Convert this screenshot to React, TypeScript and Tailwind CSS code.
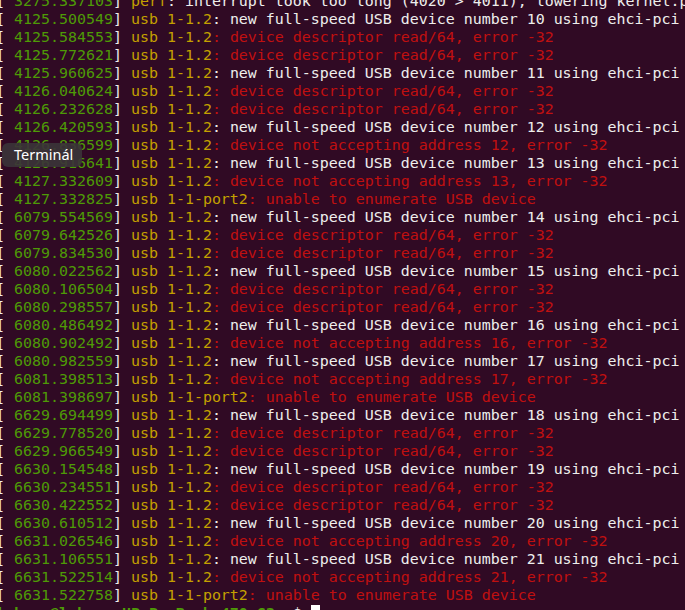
type Kind = "info" | "err";

const rows: [string, string, string, Kind][] = [
  ["3275.337103", "perf", ": interrupt took too long (4020 > 4011), lowering kernel.perf_event_max_sample_rate to 49500", "info"],
  ["4125.500549", "usb 1-1.2", ": new full-speed USB device number 10 using ehci-pci", "info"],
  ["4125.584553", "usb 1-1.2", ": device descriptor read/64, error -32", "err"],
  ["4125.772621", "usb 1-1.2", ": device descriptor read/64, error -32", "err"],
  ["4125.960625", "usb 1-1.2", ": new full-speed USB device number 11 using ehci-pci", "info"],
  ["4126.040624", "usb 1-1.2", ": device descriptor read/64, error -32", "err"],
  ["4126.232628", "usb 1-1.2", ": device descriptor read/64, error -32", "err"],
  ["4126.420593", "usb 1-1.2", ": new full-speed USB device number 12 using ehci-pci", "info"],
  ["4126.836599", "usb 1-1.2", ": device not accepting address 12, error -32", "err"],
  ["4126.916641", "usb 1-1.2", ": new full-speed USB device number 13 using ehci-pci", "info"],
  ["4127.332609", "usb 1-1.2", ": device not accepting address 13, error -32", "err"],
  ["4127.332825", "usb 1-1-port2", ": unable to enumerate USB device", "err"],
  ["6079.554569", "usb 1-1.2", ": new full-speed USB device number 14 using ehci-pci", "info"],
  ["6079.642526", "usb 1-1.2", ": device descriptor read/64, error -32", "err"],
  ["6079.834530", "usb 1-1.2", ": device descriptor read/64, error -32", "err"],
  ["6080.022562", "usb 1-1.2", ": new full-speed USB device number 15 using ehci-pci", "info"],
  ["6080.106504", "usb 1-1.2", ": device descriptor read/64, error -32", "err"],
  ["6080.298557", "usb 1-1.2", ": device descriptor read/64, error -32", "err"],
  ["6080.486492", "usb 1-1.2", ": new full-speed USB device number 16 using ehci-pci", "info"],
  ["6080.902492", "usb 1-1.2", ": device not accepting address 16, error -32", "err"],
  ["6080.982559", "usb 1-1.2", ": new full-speed USB device number 17 using ehci-pci", "info"],
  ["6081.398513", "usb 1-1.2", ": device not accepting address 17, error -32", "err"],
  ["6081.398697", "usb 1-1-port2", ": unable to enumerate USB device", "err"],
  ["6629.694499", "usb 1-1.2", ": new full-speed USB device number 18 using ehci-pci", "info"],
  ["6629.778520", "usb 1-1.2", ": device descriptor read/64, error -32", "err"],
  ["6629.966549", "usb 1-1.2", ": device descriptor read/64, error -32", "err"],
  ["6630.154548", "usb 1-1.2", ": new full-speed USB device number 19 using ehci-pci", "info"],
  ["6630.234551", "usb 1-1.2", ": device descriptor read/64, error -32", "err"],
  ["6630.422552", "usb 1-1.2", ": device descriptor read/64, error -32", "err"],
  ["6630.610512", "usb 1-1.2", ": new full-speed USB device number 20 using ehci-pci", "info"],
  ["6631.026546", "usb 1-1.2", ": device not accepting address 20, error -32", "err"],
  ["6631.106551", "usb 1-1.2", ": new full-speed USB device number 21 using ehci-pci", "info"],
  ["6631.522514", "usb 1-1.2", ": device not accepting address 21, error -32", "err"],
  ["6631.522758", "usb 1-1-port2", ": unable to enumerate USB device", "err"],
];

export default function App() {
  return (
    <div className="relative h-[610px] w-[685px] overflow-hidden bg-[#300a24]">
      <div className="-ml-[4px] -mt-[8px] whitespace-pre font-['DejaVu_Sans_Mono',monospace] text-[14.95px] leading-[18px] text-[#eeeeec]">
        {rows.map(([ts, dev, msg, kind]) => (
          <div key={ts} className="h-[18px]">
            <span>[ </span>
            <span className="text-[#4e9a06]">{ts}</span>
            <span>] </span>
            <span className="text-[#c4a000]">{dev}</span>
            <span className={kind === "err" ? "text-[#c01010]" : ""}>{msg}</span>
          </div>
        ))}
        <div className="h-[18px]">
          <span className="font-bold text-[#4e9a06]">lukasz@lukasz-HP-ProBook-470-G3</span>
          <span>:</span>
          <span className="font-bold text-[#3465a4]">~</span>
          <span>$ </span>
          <span className="inline-block h-[17px] w-[9px] translate-y-[1px] bg-white align-top"></span>
        </div>
      </div>

      <div className="absolute left-[2px] top-[143px] flex h-[24px] w-[80px] items-center rounded-[6px] bg-[#3b3438]/90 pl-[12px] font-['Noto_Sans',sans-serif] text-[14.5px] text-white">
        Terminál
      </div>
    </div>
  );
}
